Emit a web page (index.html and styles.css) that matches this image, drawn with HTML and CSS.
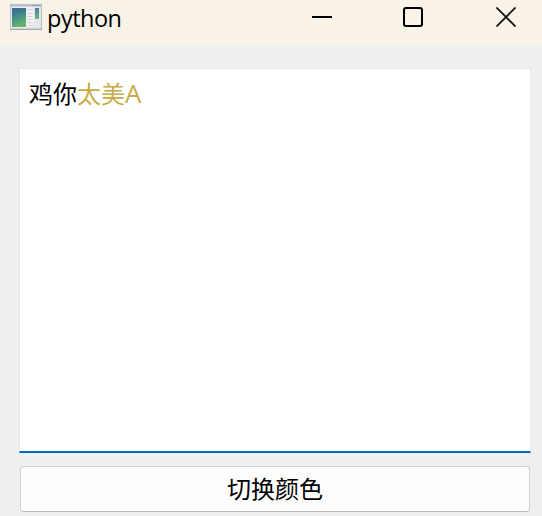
FILE: index.html
```html
<!DOCTYPE html>
<html lang="zh-CN">
<head>
<meta charset="utf-8">
<title>python</title>
<link rel="stylesheet" href="styles.css">
</head>
<body>
<div class="window">
  <header class="titlebar">
    <svg class="app-icon" width="32" height="27" viewBox="0 0 32 27">
      <defs>
        <linearGradient id="pane" x1="0" y1="0" x2="0.35" y2="1">
          <stop offset="0" stop-color="#3a7199"/>
          <stop offset="0.5" stop-color="#438b8b"/>
          <stop offset="1" stop-color="#66b36b"/>
        </linearGradient>
        <linearGradient id="strip" x1="0" y1="0" x2="0" y2="1">
          <stop offset="0" stop-color="#477fa5"/>
          <stop offset="1" stop-color="#72b981"/>
        </linearGradient>
      </defs>
      <rect x="0.5" y="0.5" width="31" height="24.500" fill="#e3e5e8" stroke="#b9bfc5"/>
      <path d="M1 1.5h30" stroke="#b4c0cd" stroke-width="2"/>
      <path d="M22 1.5h8" stroke="#93a1b3"/>
      <path d="M0 25.500h32" stroke="#a5a8ab"/>
      <rect x="1.500" y="3.500" width="15" height="20" fill="#f4f6f7"/>
      <rect x="2" y="4" width="14" height="19" fill="url(#pane)"/>
      <path d="M2 10c6 1 9-2 14-1V4H2z" fill="#315f8d" opacity=".3"/>
      <rect x="17.500" y="3" width="6.500" height="20" fill="#f3f3f3"/>
      <path d="M18 5.500h5M18 9.500h5M18 12.500h4M18 15.500h5M18 18.500h5M18 21.500h5" stroke="#d0d2d4"/>
      <rect x="25" y="4" width="4" height="11" fill="url(#strip)"/>
      <path d="M25 17.500h4M25 20.500h4" stroke="#eee"/>
    </svg>
    <span class="title">python</span>
    <div class="controls">
      <svg width="20" height="20" viewBox="0 0 20 20"><path d="M0 10h20" stroke="#000" stroke-width="2"/></svg>
      <svg width="20" height="20" viewBox="0 0 20 20"><rect x="1" y="1" width="18" height="18" rx="2" fill="none" stroke="#000" stroke-width="2"/></svg>
      <svg width="20" height="20" viewBox="0 0 20 20"><path d="M.5.5l19 19M19.500.5l-19 19" stroke="#111" stroke-width="1.800"/></svg>
    </div>
  </header>
  <main class="content">
    <div class="editor"><span>鸡你</span><span class="tinted">太美<span class="latin">A</span></span></div>
    <button class="switch" type="button">切换颜色</button>
  </main>
</div>
</body>
</html>
```
FILE: styles.css
```css
* { box-sizing: border-box; }
body { margin: 0; }
.window {
  height: 516px;
  display: flex;
  flex-direction: column;
  overflow: hidden;
  background: #efefef;
  color: #000;
  font-family: "Noto Sans", "Noto Sans CJK SC", sans-serif;
}
.titlebar {
  height: 46px;
  flex: none;
  display: flex;
  align-items: flex-start;
  padding-left: 10px;
  background: #f9f2e6;
}
.app-icon { margin-top: 4px; flex: none; }
.title {
  margin: 2px 0 0 5px;
  font-family: "Open Sans", sans-serif;
  font-size: 23.5px;
  letter-spacing: -0.5px;
  line-height: 33px;
}
.controls {
  display: flex;
  margin: 7px 26px 0 auto;
}
.controls svg { display: block; }
.controls svg:nth-child(1) { margin-right: 71px; }
.controls svg:nth-child(2) { margin-right: 73px; }
.content {
  flex: 1;
  display: flex;
  flex-direction: column;
  padding: 22px 11px 4px 19px;
}
.editor {
  height: 385px;
  padding: 7px 9px;
  background: #fff;
  border: 1px solid #e5e9ec;
  border-bottom: 2px solid #0067c0;
  font-family: "Noto Sans CJK SC", sans-serif;
  font-size: 24px;
  line-height: 34px;
}
.tinted { color: #c8aa46; }
.latin { font-family: "Open Sans", sans-serif; font-size: 26px; line-height: 1; }
.switch {
  height: 46px;
  margin: 13px 1px 0;
  padding: 0 0 2px;
  background: #fdfdfd;
  border: 1px solid #d0d0d0;
  border-bottom-color: #bababa;
  border-radius: 4px;
  color: #000;
  font-family: "Noto Sans CJK SC", sans-serif;
  font-size: 24px;
  line-height: 34px;
}
```
